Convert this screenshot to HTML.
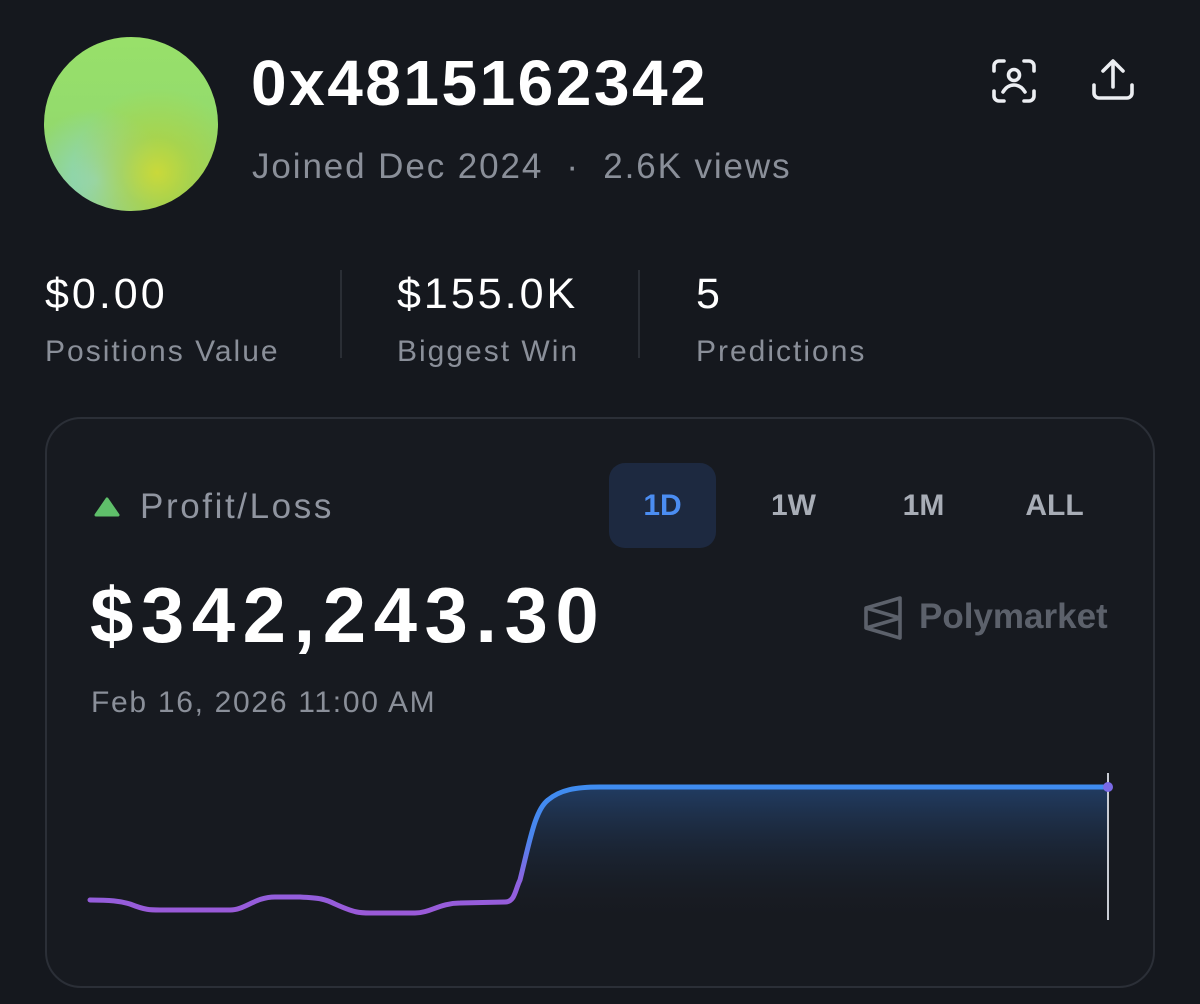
<!DOCTYPE html>
<html><head><meta charset="utf-8"><style>
*{margin:0;padding:0;box-sizing:border-box}
body{width:1200px;height:1004px;background:#15181e;font-family:"Liberation Sans",sans-serif;position:relative;overflow:hidden;color:#fff}
.a{position:absolute;white-space:nowrap}
.av{left:44px;top:37px;width:174px;height:174px;border-radius:50%;
background:radial-gradient(circle at 65% 78%,#c9d93a 0,rgba(180,210,60,.6) 20%,rgba(150,210,90,0) 48%),radial-gradient(circle at 30% 82%,#8fd6c8 0,rgba(140,210,190,0) 38%),linear-gradient(180deg,#98e06a 0,#94dc6c 40%,#8fcf6a 100%)}
.g{color:#8a8f99}
.sep{position:absolute;width:2px;background:#2a2e35}
.card{left:45px;top:417px;width:1110px;height:571px;border:2px solid #2b2f37;border-radius:36px;background:#171a20}
.tab{top:463px;width:107px;height:85px;border-radius:16px;font-size:30px;font-weight:bold;color:#a8adb6;text-align:center;line-height:85px}
.st{font-size:43px;letter-spacing:3px}
.lb{font-size:30px;letter-spacing:2px}
</style></head><body>
<div class="a av"></div>
<div class="a" style="left:251px;top:46px;font-size:64px;font-weight:bold;letter-spacing:2.5px">0x4815162342</div>
<div class="a g" style="left:252px;top:147px;font-size:35px;letter-spacing:1.9px">Joined Dec 2024 &nbsp;·&nbsp; 2.6K views</div>
<svg class="a" style="left:990px;top:57px" width="48" height="48" viewBox="0 0 48 48" fill="none" stroke="#eceef2" stroke-width="3.6" stroke-linecap="round">
<path d="M4 14V9a5 5 0 0 1 5-5h5M34 4h5a5 5 0 0 1 5 5v5M44 34v5a5 5 0 0 1-5 5h-5M14 44H9a5 5 0 0 1-5-5v-5"/>
<circle cx="24" cy="18" r="5.5"/><path d="M13 35c3-5 7-7 11-7s8 2 11 7"/></svg>
<svg class="a" style="left:1090px;top:57px" width="46" height="46" viewBox="0 0 46 46" fill="none" stroke="#eceef2" stroke-width="3.6" stroke-linecap="round" stroke-linejoin="round">
<path d="M23 30V5M13 14l10-10 10 10"/><path d="M4 28v8a5 5 0 0 0 5 5h28a5 5 0 0 0 5-5v-8"/></svg>
<div class="a st" style="left:45px;top:270px">$0.00</div>
<div class="a g lb" style="left:45px;top:335px">Positions Value</div>
<div class="sep" style="left:340px;top:270px;height:88px"></div>
<div class="a st" style="left:397px;top:270px">$155.0K</div>
<div class="a g lb" style="left:397px;top:335px">Biggest Win</div>
<div class="sep" style="left:638px;top:270px;height:88px"></div>
<div class="a st" style="left:696px;top:270px">5</div>
<div class="a g lb" style="left:696px;top:335px">Predictions</div>
<div class="a card"></div>
<svg class="a" style="left:93px;top:496px" width="28" height="22" viewBox="0 0 28 22"><path d="M14 3L25 19H3Z" fill="#5fbf6a" stroke="#5fbf6a" stroke-width="3" stroke-linejoin="round"/></svg>
<div class="a g" style="left:140px;top:487px;font-size:35px;color:#9095a0;letter-spacing:2.6px">Profit/Loss</div>
<div class="a tab" style="left:609px;background:#1d2940;color:#4b8df2">1D</div>
<div class="a tab" style="left:740px">1W</div>
<div class="a tab" style="left:870px">1M</div>
<div class="a tab" style="left:1001px">ALL</div>
<div class="a" style="left:90px;top:570px;font-size:78px;font-weight:bold;letter-spacing:7.5px">$342,243.30</div>
<svg class="a" style="left:862px;top:595px" width="42" height="46" viewBox="0 0 42 46" fill="none" stroke="#5c616b" stroke-width="3.6" stroke-linejoin="round"><path d="M38 3L4 13v20l34 10Z M4 13l34 10L4 33"/></svg>
<div class="a" style="left:919px;top:597px;font-size:35px;font-weight:bold;color:#5c616b">Polymarket</div>
<div class="a g" style="left:91px;top:686px;font-size:30px;letter-spacing:1.7px">Feb 16, 2026 11:00 AM</div>
<svg class="a" style="left:0;top:0" width="1200" height="1004">
<defs>
<linearGradient id="f" x1="0" y1="0" x2="0" y2="1"><stop offset="0" stop-color="#23426e" stop-opacity=".85"/><stop offset="1" stop-color="#1a1e26" stop-opacity="0"/></linearGradient>
<linearGradient id="s" gradientUnits="userSpaceOnUse" x1="0" y1="787" x2="0" y2="913"><stop offset="0" stop-color="#3f8cf0"/><stop offset="0.4" stop-color="#4a86ee"/><stop offset="0.75" stop-color="#8d62e0"/><stop offset="1" stop-color="#9a5ad8"/></linearGradient>
</defs>
<path d="M520 880 C530 840 535 810 548 800 C560 790 575 787 600 787 L1107 787 L1107 920 L520 920Z" fill="url(#f)"/>
<path d="M90 900 C110 900 120 901 130 904 C145 910 150 910 160 910 L230 910 C245 910 255 897 275 897 L300 897 C320 898 325 899 335 904 C355 913 360 913 370 913 L415 913 C430 913 440 903 460 903 L505 902 C515 902 515 890 520 880 C530 840 535 810 548 800 C560 790 575 787 600 787 L1107 787" fill="none" stroke="url(#s)" stroke-width="5" stroke-linecap="round"/>
<line x1="1108" y1="773" x2="1108" y2="920" stroke="#c8ccd4" stroke-width="2"/>
<circle cx="1108" cy="787" r="5" fill="#7a6ae6"/>
</svg>
</body></html>
